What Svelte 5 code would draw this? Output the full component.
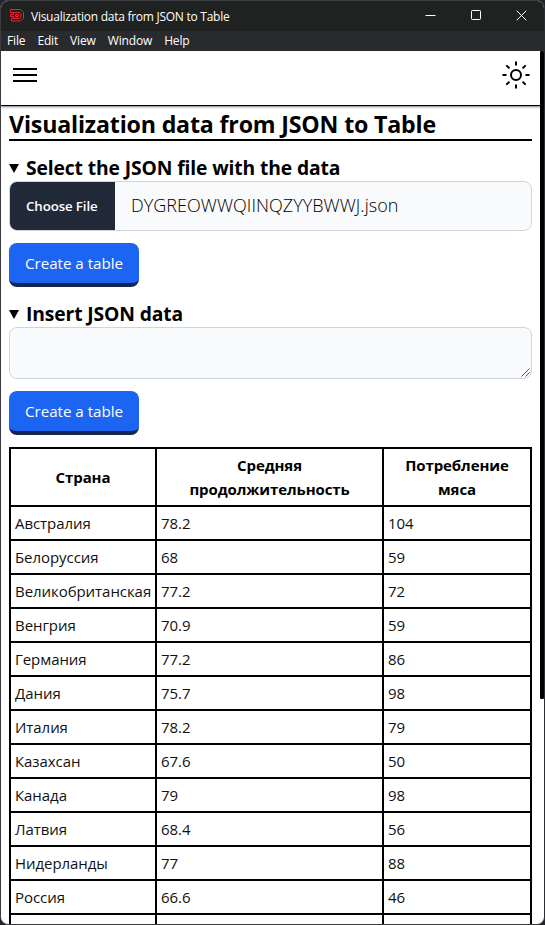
<script>
  const menu = ['File', 'Edit', 'View', 'Window', 'Help'];
  const rows = [
    ['Австралия', '78.2', '104'],
    ['Белоруссия', '68', '59'],
    ['Великобританская', '77.2', '72'],
    ['Венгрия', '70.9', '59'],
    ['Германия', '77.2', '86'],
    ['Дания', '75.7', '98'],
    ['Италия', '78.2', '79'],
    ['Казахсан', '67.6', '50'],
    ['Канада', '79', '98'],
    ['Латвия', '68.4', '56'],
    ['Нидерланды', '77', '88'],
    ['Россия', '66.6', '46'],
    ['', '', '']
  ];
</script>

<div class="desktop">
  <div class="window">
    <div class="titlebar">
      <svg class="logo" width="14" height="13" viewBox="0 0 14 13" fill="none" stroke="#f0202e" stroke-width="1">
        <path d="M.5.5H10.5L13.5 3.5V9L10.5 12H1.5V9.5H3.5V7.5H.5V5.5H3.5V3.5H.5Z" />
        <path d="M3.5 3.5H9.5L11 5V8L9.5 9.5H3.5M5.5 5.5H8.5V7.5H5.5Z" />
      </svg>
      <span class="title">Visualization data from JSON to Table</span>
      <div class="controls">
        <svg width="11" height="11" viewBox="0 0 11 11"><path d="M.5 5.5h10" /></svg>
        <svg width="11" height="11" viewBox="0 0 11 11"><rect x=".5" y=".5" width="9" height="9" rx=".8" /></svg>
        <svg width="11" height="11" viewBox="0 0 11 11"><path d="M.7.7l9.6 9.6M10.3.7L.7 10.3" /></svg>
      </div>
    </div>
    <div class="menu">
      {#each menu as item}<span>{item}</span>{/each}
    </div>
    <div class="view">
      <div class="page">
        <header>
          <svg class="burger" width="24" height="14" viewBox="0 0 24 14"><path d="M0 1h24M0 7h24M0 13h24" stroke="#000" stroke-width="2" /></svg>
          <svg class="sun" width="28" height="28" viewBox="0 0 28 28" fill="none" stroke="#000" stroke-width="2" stroke-linecap="round">
            <circle cx="14" cy="14" r="5" />
            <path d="M14 1.2v2.6M14 24.2v2.6M1.2 14h2.6M24.2 14h2.6M4.9 4.9l1.9 1.9M21.2 21.2l1.9 1.9M4.9 23.1l1.9-1.9M21.2 6.8l1.9-1.9" />
          </svg>
        </header>
        <main>
          <h1>Visualization data from JSON to Table</h1>
          <section>
            <h2>
              <svg width="10" height="9" viewBox="0 0 10 9"><path d="M0 0h10L5 9z" /></svg>
              <span>Select the JSON file with the data</span>
            </h2>
            <div class="file">
              <span class="choose">Choose File</span>
              <span class="name">DYGREOWWQIINQZYYBWWJ.json</span>
            </div>
            <button>Create a table</button>
          </section>
          <section>
            <h2>
              <svg width="10" height="9" viewBox="0 0 10 9"><path d="M0 0h10L5 9z" /></svg>
              <span>Insert JSON data</span>
            </h2>
            <div class="area">
              <svg width="9" height="9" viewBox="0 0 9 9"><path d="M.5 8.5l8-8M4.5 8.5l4-4" stroke="#444" stroke-width=".9" /></svg>
            </div>
            <button>Create a table</button>
          </section>
          <table>
            <colgroup><col class="c1" /><col class="c2" /><col class="c3" /></colgroup>
            <thead>
              <tr><th>Страна</th><th>Средняя<br />продолжительность</th><th>Потребление<br />мяса</th></tr>
            </thead>
            <tbody>
              {#each rows as row}
                <tr>{#each row as cell}<td>{cell}</td>{/each}</tr>
              {/each}
            </tbody>
          </table>
        </main>
      </div>
      <div class="scroll"><div class="thumb"></div></div>
    </div>
  </div>
</div>

<style>
  :global(body) { margin: 0; }
  .desktop {
    box-sizing: border-box;
    width: 545px;
    height: 925px;
    overflow: hidden;
    background: #20232a;
    font-family: 'Open Sans', 'Noto Sans', sans-serif;
    color: #000;
  }
  .window {
    box-sizing: border-box;
    height: 925px;
    border: 1px solid #3c3d40;
    border-right-color: #2c2d30;
    border-radius: 8px;
    overflow: hidden;
    background: #fff;
    display: flex;
    flex-direction: column;
  }
  .titlebar {
    height: 30px;
    flex: none;
    background: #202121;
    color: #fff;
    display: flex;
    align-items: center;
    font-size: 12px;
  }
  .logo { flex: none; margin: 0 7px 1px 9px; }
  .title { white-space: nowrap; letter-spacing: -0.26px; }
  .controls { margin: 0 17px 2px auto; display: flex; gap: 35px; }
  .controls svg { display: block; fill: none; stroke: #fff; stroke-width: 1; }
  .controls svg:nth-child(2) { margin-right: -1px; }
  .menu {
    height: 20px;
    flex: none;
    background: #292a2e;
    color: #fff;
    display: flex;
    gap: 12px;
    padding-left: 6px;
    font-size: 12px;
    line-height: 20px;
    letter-spacing: -0.15px;
  }
  .view { flex: 1; min-height: 0; display: flex; }
  .page { flex: 1; min-width: 0; overflow: hidden; }
  .scroll { width: 4px; }
  .thumb { height: 648px; background: #000; border-radius: 1px; }
  header {
    box-sizing: border-box;
    height: 55px;
    border-bottom: 1px solid #000;
    box-shadow: 0 1px 2px #777c88;
    padding: 0 10px 6px 12px;
    display: flex;
    justify-content: space-between;
    align-items: center;
  }
  main { padding: 1px 8px 0; }
  h1 {
    margin: 0;
    height: 32px;
    border-bottom: 2px solid #000;
    font-size: 23.2px;
    line-height: 35px;
    font-weight: 700;
    letter-spacing: -0.18px;
    white-space: nowrap;
  }
  section { margin-top: 12px; }
  h2 {
    margin: 0;
    height: 28px;
    display: flex;
    align-items: center;
    gap: 7px;
    font-size: 19.3px;
    line-height: 28px;
    font-weight: 700;
    letter-spacing: -0.12px;
    white-space: nowrap;
  }
  h2 svg { margin-top: 3px; }
  h2 span { padding-top: 1px; }
  .file, .area {
    box-sizing: border-box;
    border: 1px solid #d1d5db;
    border-radius: 8px;
    background: #f9fafb;
    overflow: hidden;
    display: flex;
  }
  .file { height: 50px; }
  .choose {
    box-sizing: border-box;
    width: 105px;
    background: #1f2937;
    color: #fff;
    padding-left: 16px;
    font-size: 13.3px;
    font-weight: 650;
    line-height: 49px;
    letter-spacing: -0.12px;
    white-space: nowrap;
  }
  .name { margin-left: 16px; font-size: 18px; line-height: 46px; font-weight: 300; letter-spacing: 0.04px; }
  .area { height: 52px; justify-content: flex-end; align-items: flex-end; padding: 0 1px 1px 0; }
  button {
    display: block;
    box-sizing: border-box;
    width: 130px;
    height: 44px;
    margin: 12px 0 0;
    padding: 0;
    border: 0;
    border-bottom: 4px solid #172554;
    border-radius: 8px;
    background: #1c64f2;
    color: #fff;
    font: 400 15.2px/41px 'Open Sans', sans-serif;
    letter-spacing: -0.05px;
    white-space: nowrap;
  }
  table {
    table-layout: fixed;
    width: 523px;
    margin-top: 12px;
    border-collapse: collapse;
    font-size: 15px;
    line-height: 24px;
  }
  .c1 { width: 146px; }
  .c2 { width: 227px; }
  .c3 { width: 148px; }
  th, td { border: 2px solid #000; padding: 4px; white-space: nowrap; }
  th { font-weight: 700; text-align: center; letter-spacing: -0.1px; }
  td { height: 24px; font-weight: 400; text-align: left; letter-spacing: -0.06px; color: #111; }
</style>
